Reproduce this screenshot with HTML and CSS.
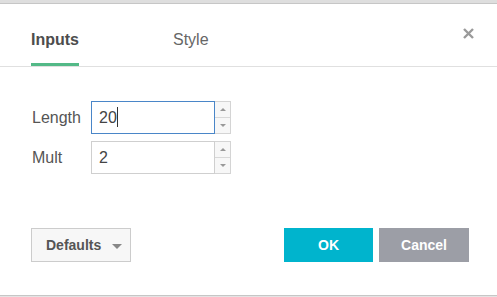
FILE: index.html
```html
<!DOCTYPE html>
<html lang="en">
<head>
    <meta charset="UTF-8">
    <title>Indicator settings</title>
    <link rel="stylesheet" href="styles.css">
</head>
<body>
    <div class="backdrop-top"></div>

    <div class="dialog">
        <!-- Tabs -->
        <div class="tabs">
            <div class="tab active">Inputs</div>
            <div class="tab">Style</div>
            <div class="close">
                <svg width="11" height="11" viewBox="0 0 11 11">
                    <path d="M1 1 L10 10 M10 1 L1 10" stroke="#9a9a9a" stroke-width="2.4" fill="none"/>
                </svg>
            </div>
        </div>

        <!-- Inputs -->
        <div class="form">
            <div class="row">
                <label class="label">Length</label>
                <div class="field focused">20<span class="caret"></span></div>
                <div class="spin">
                    <span class="spin-up"></span>
                    <span class="spin-down"></span>
                </div>
            </div>
            <div class="row">
                <label class="label">Mult</label>
                <div class="field">2</div>
                <div class="spin">
                    <span class="spin-up"></span>
                    <span class="spin-down"></span>
                </div>
            </div>
        </div>

        <!-- Buttons -->
        <div class="footer">
            <button class="btn-defaults">Defaults <span class="arrow"></span></button>
            <div class="actions">
                <button class="btn-ok">OK</button>
                <button class="btn-cancel">Cancel</button>
            </div>
        </div>
    </div>

    <div class="backdrop-bottom"></div>
</body>
</html>
```

FILE: styles.css
```css
body {
    font-family: "Liberation Sans", Arial, sans-serif;
    margin: 0;
    padding: 0;
    width: 497px;
    height: 297px;
    overflow: hidden;
    background-color: #ffffff;
}

.backdrop-top {
    height: 3px;
    background-color: #dedede;
    border-bottom: 1px solid #c6c6c6;
}

.backdrop-bottom {
    height: 1px;
    background-color: #e4e4e4;
    border-top: 1px solid #c6c6c6;
}

.dialog {
    background-color: #ffffff;
}

/* Tabs */
.tabs {
    display: flex;
    align-items: flex-start;
    border-bottom: 1px solid #e0e0e0;
    padding-left: 31px;
}

.tab {
    font-size: 16px;
    line-height: 19px;
    color: #666;
    padding: 26px 0 14px;
    border-bottom: 3px solid transparent;
}

.tab.active {
    font-weight: bold;
    color: #4d4d4d;
    border-bottom-color: #53b987;
}

.tab + .tab {
    margin-left: 94px;
}

.close {
    margin-left: auto;
    margin-right: 23px;
    padding-top: 24px;
    line-height: 0;
}

/* Form */
.form {
    padding: 34px 0 0 32px;
}

.row {
    display: flex;
    align-items: center;
    height: 33px;
}

.row + .row {
    margin-top: 7px;
}

.label {
    width: 59px;
    font-size: 16px;
    color: #555;
}

.field {
    box-sizing: border-box;
    width: 124px;
    height: 33px;
    border: 1px solid #cfcfcf;
    padding: 0 7px;
    font-size: 16px;
    line-height: 31px;
    color: #444;
}

.field.focused {
    border-color: #4a86c8;
}

.caret {
    display: inline-block;
    width: 1px;
    height: 20px;
    background-color: #333;
    vertical-align: -4px;
}

.spin {
    box-sizing: border-box;
    width: 16px;
    height: 33px;
    display: flex;
    flex-direction: column;
    border: 1px solid #d4d4d4;
    border-left: none;
}

.spin span {
    flex: 1;
    position: relative;
    background-color: #f7f7f7;
}

.spin-up {
    border-bottom: 1px solid #d8d8d8;
}

.spin span::after {
    content: "";
    position: absolute;
    left: 5px;
    top: 6px;
    border-left: 3px solid transparent;
    border-right: 3px solid transparent;
}

.spin-up::after {
    border-bottom: 3px solid #999;
}

.spin-down::after {
    border-top: 3px solid #999;
}

/* Footer */
.footer {
    display: flex;
    justify-content: space-between;
    padding: 54px 28px 33px 31px;
}

button {
    font-family: "Liberation Sans", Arial, sans-serif;
    font-size: 14px;
    font-weight: bold;
    height: 34px;
    border: none;
    padding: 0;
    cursor: pointer;
}

.btn-defaults {
    width: 100px;
    background-color: #f7f7f7;
    border: 1px solid #cccccc;
    color: #555;
    text-align: left;
    padding-left: 14px;
}

.arrow {
    display: inline-block;
    margin-left: 7px;
    border-left: 5px solid transparent;
    border-right: 5px solid transparent;
    border-top: 5px solid #888;
    vertical-align: 1px;
}

.actions {
    display: flex;
    gap: 6px;
}

.btn-ok {
    width: 89px;
    background-color: #00b4cd;
    color: white;
}

.btn-cancel {
    width: 90px;
    background-color: #9c9ea6;
    color: white;
}
```
